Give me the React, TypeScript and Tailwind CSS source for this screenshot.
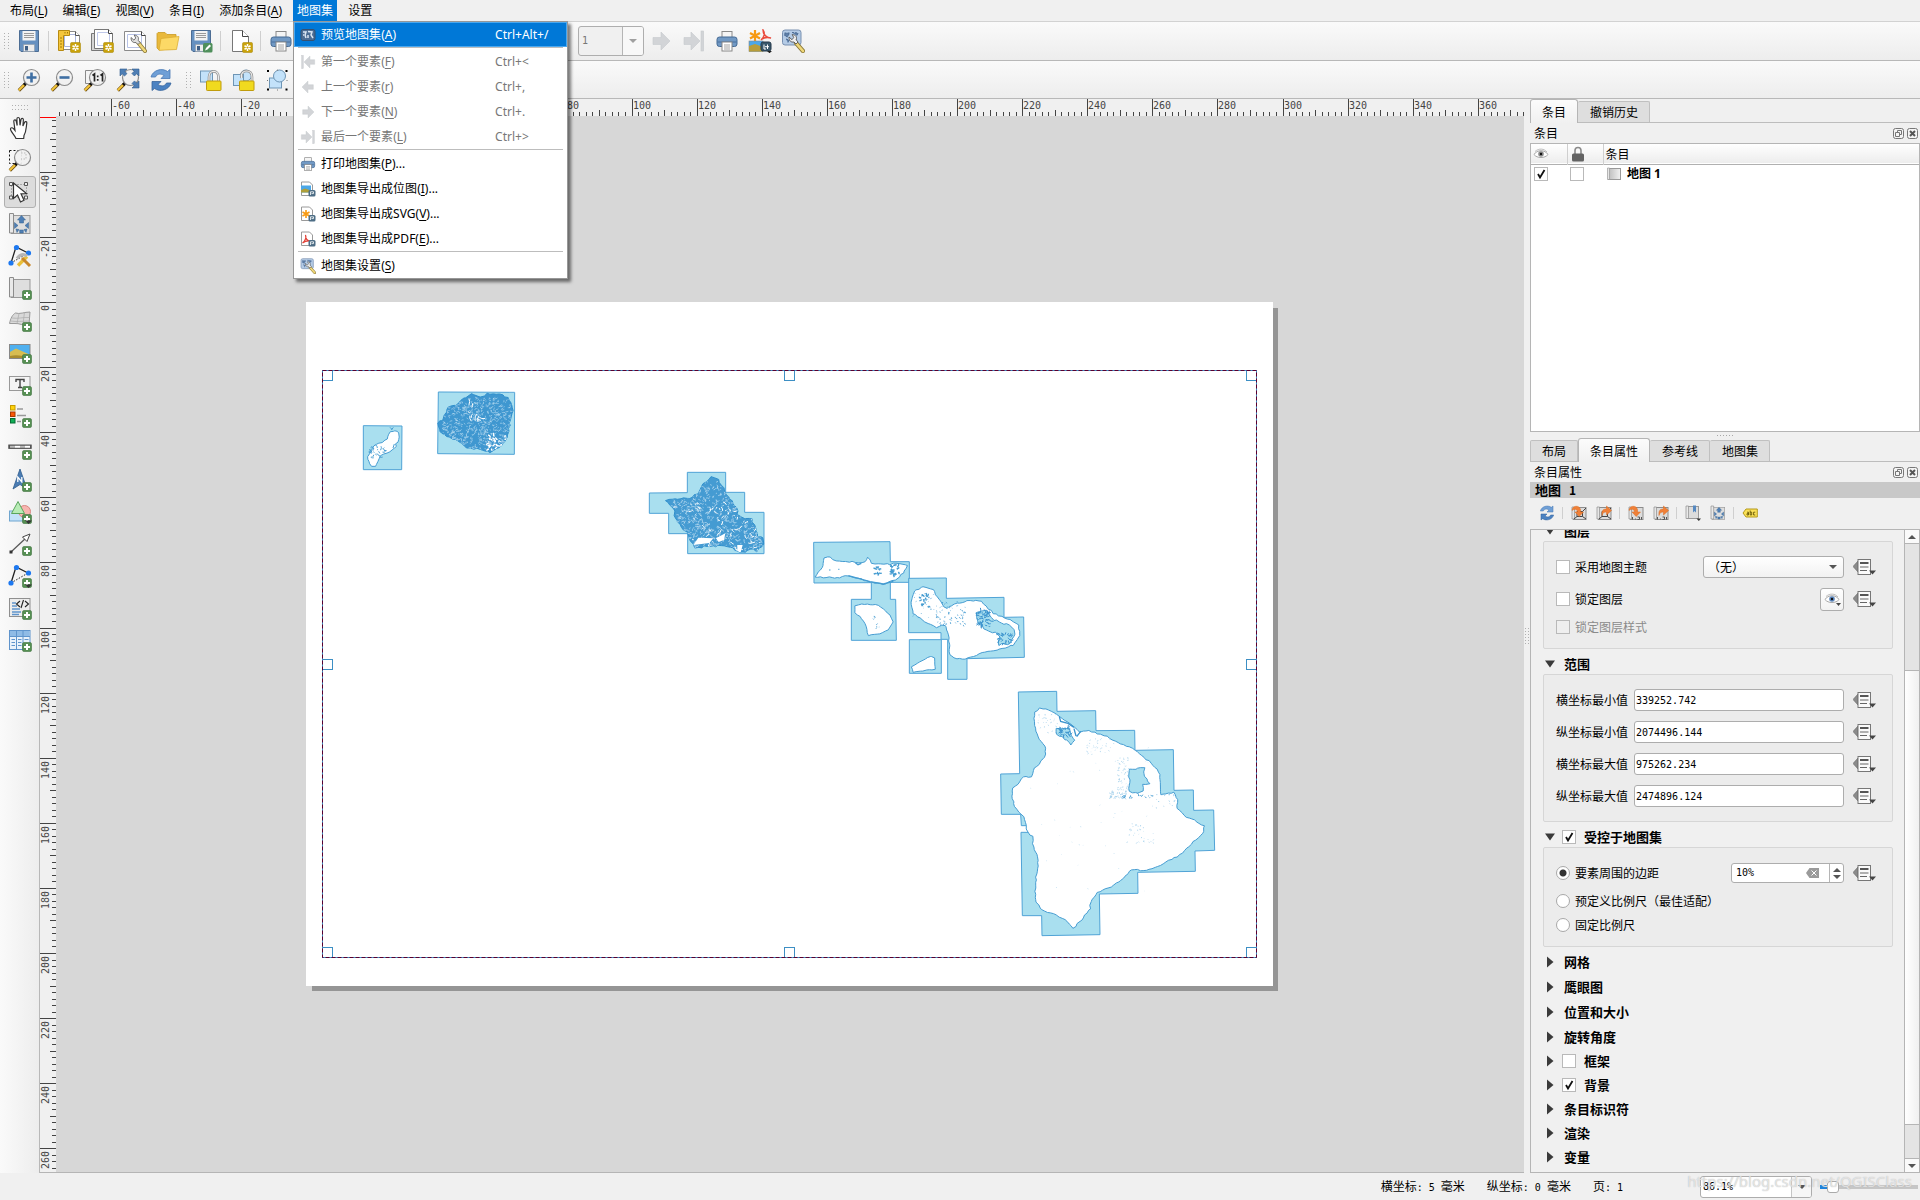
import React from "react";

/* ------------------------------------------------------------------ */
/* Shared bits                                                         */
/* ------------------------------------------------------------------ */

type IconProps = { size?: string; children: React.ReactNode; box?: string };

function Svg({ size = "size-6", box = "0 0 24 24", children }: IconProps) {
  return (
    <svg viewBox={box} className={`${size} shrink-0`} aria-hidden="true">
      {children}
    </svg>
  );
}

const PlusBadge = () => (
  <g>
    <rect x="14.5" y="14.5" width="9" height="9" rx="1.5" fill="#568f53" stroke="#3f7340" strokeWidth=".6" />
    <path d="M19 16v6M16 19h6" stroke="#fff" strokeWidth="2" />
  </g>
);

const StarBadge = () => (
  <g>
    <rect x="13.5" y="13.5" width="10" height="10" rx="1.2" fill="#c9a20a" stroke="#a58300" strokeWidth=".5" />
    <path d="M18.500 15v7M15.500 16.750l6 3.500M15.500 20.250l6-3.500" stroke="#fff" strokeWidth="1.500" />
    <circle cx="18.500" cy="18.500" r="1" fill="#c9a20a" />
  </g>
);

const DropMark = () => <path d="M17 20.500h7l-3.500 3.500z" fill="#333" />;

/* ------------------------------------------------------------------ */
/* Toolbar icons                                                       */
/* ------------------------------------------------------------------ */

const DiskShape = () => (
  <g>
    <path d="M2.500 1.500h19v21h-17.500l-1.500-1.500z" fill="#6590c0" stroke="#4c6d94" />
    <rect x="5.500" y="2" width="13" height="9.500" fill="#f3f3f3" />
    <path d="M7 4.500h10M7 6.500h10M7 8.500h10" stroke="#9a9a9a" />
    <rect x="6.500" y="15.500" width="11" height="7" fill="#ececec" stroke="#8d99a8" strokeWidth=".6" />
    <rect x="8" y="17" width="3" height="4.500" fill="#3f5f86" />
  </g>
);

const IconSave = () => (
  <Svg>
    <DiskShape />
  </Svg>
);
const IconSaveAs = () => (
  <Svg>
    <DiskShape />
    <rect x="14" y="14" width="9.500" height="9.500" rx="1.500" fill="#4f8f5b" />
    <path d="M16 21.500l1-2.500 3.500-3.500 1.500 1.500-3.500 3.500z" fill="#fff" />
  </Svg>
);
const IconNewLayout = () => (
  <Svg>
    <path d="M4.500 2.500h14l4 4v14h-18z" fill="#fff" stroke="#8a8a8a" />
    <path d="M7.500 5.500h11v12h-11z" fill="none" stroke="#aab6dd" />
    <path d="M18.500 2.500v4h4" fill="#fff" stroke="#555" />
    <path d="M1.500 1.500h11v5h-6v15h-5z" fill="#f5c63b" stroke="#b78b12" />
    <path d="M3 9h2M3 12h2M3 15h2M3 18h2M8 3v1.500M10.500 3v1.500" stroke="#8c6900" strokeWidth=".8" />
    <StarBadge />
  </Svg>
);
const IconDuplicate = () => (
  <Svg>
    <path d="M1.500 4.500h16v17h-16z" fill="#d5d5d5" stroke="#777" />
    <path d="M4.500 .5h14l4 4v15h-18z" fill="#fff" stroke="#777" />
    <path d="M7.500 3.500h12v13h-12z" fill="none" stroke="#c0c9ea" />
    <path d="M18.500 .5v4h4" fill="#fff" stroke="#444" />
    <StarBadge />
  </Svg>
);
const IconManager = () => (
  <Svg>
    <path d="M1.500 2.500h17l4 4v15h-21z" fill="#fff" stroke="#8a8a8a" />
    <path d="M4.500 5.500h14v13h-14z" fill="none" stroke="#b7c2e6" />
    <path d="M18.500 2.500v4h4" fill="#fff" stroke="#444" />
    <path d="M15.500 14l6.500 8" stroke="#8c7a3b" strokeWidth="4" strokeLinecap="round" />
    <path d="M15.500 14l6.500 8" stroke="#f0d879" strokeWidth="2.400" strokeLinecap="round" />
    <path d="M8 8.500c0 4 2 5.500 5 5l2 2 2-2-1.800-2.200c1-3-.5-4.800-4-5.300l1.500 3-1.700 2.200z" fill="#e2e2e2" stroke="#555" strokeWidth=".8" />
  </Svg>
);
const IconFolder = () => (
  <Svg>
    <path d="M1 4.500l1-1h7l2 2h9v14l-17 1.500-2-2z" fill="#e9b93c" stroke="#c99a23" strokeWidth=".8" />
    <path d="M5 9.500l18-2-2.500 13-17.500.800z" fill="#fcd966" stroke="#dcae35" strokeWidth=".8" />
  </Svg>
);
const IconNewPage = () => (
  <Svg>
    <path d="M3.500 1.500h10l6 6v15h-16z" fill="#fff" stroke="#777" />
    <path d="M13.500 1.500v6h6" fill="#fff" stroke="#444" />
    <StarBadge />
  </Svg>
);
function IconPrinter({ size }: { size?: string }) {
  return (
    <Svg size={size}>
      <rect x="7" y="2.500" width="10" height="7" fill="#f5f5f5" stroke="#8a8a8a" />
      <rect x="2" y="8" width="20" height="9.500" rx="2.500" fill="#7199c4" stroke="#456a94" />
      <path d="M2.500 13h19" stroke="#4a6f9c" />
      <rect x="7" y="13" width="10" height="9" fill="#fff" stroke="#888" />
      <path d="M9 16h6M9 18h6M9 20h6" stroke="#999" strokeWidth=".9" />
    </Svg>
  );
}

function ArrowIcon({ flip, bar, size }: { flip?: boolean; bar?: boolean; size?: string }) {
  return (
    <Svg size={size}>
      <g transform={flip ? "translate(24 0) scale(-1 1)" : undefined} fill="#d2d4d7" stroke="#c6c9cc" strokeWidth=".6">
        <path d={bar ? "M2 8.500h7v-5.500l9 9-9 9v-5.500h-7z" : "M4 8.500h8v-5.500l9 9-9 9v-5.500h-8z"} />
        {bar && <rect x="19" y="2" width="2.600" height="20" />}
      </g>
    </Svg>
  );
}

const IconExportAtlas = () => (
  <Svg>
    <path d="M7 1v11M2 4l10 5.500M2 9.500l10-5.500" stroke="#f79a12" strokeWidth="2.200" />
    <path d="M13 11c3-3 4-7 2-10 0 5 4 8 8 8-4-1-8 0-10 2z" fill="none" stroke="#ea4a3c" strokeWidth="1.400" />
    <rect x="1" y="12" width="14" height="10.500" fill="#4ba7e8" stroke="#888" strokeWidth=".6" />
    <path d="M1 17l6-2 8 3v4.500h-14z" fill="#b79d3a" />
    <rect x="13" y="13" width="10" height="9" rx="2" fill="#39586b" stroke="#24394a" />
    <path d="M16 15.500v4.500h2M17 17.700h4M19.500 15.500v4.500" fill="none" stroke="#fff" />
    <path d="M19 22h5l-2.500 2.200z" fill="#222" />
  </Svg>
);
function IconAtlasSettings({ size }: { size?: string }) {
  return (
    <Svg size={size}>
      <rect x="1.500" y="1" width="18.500" height="15" rx="2.500" fill="#b4cbe6" stroke="#7890b0" />
      <path d="M3.500 4h5l-2 4-2.500-1zM11 3.500l6 .5-1 3M5 10l3 1-1 3M12 10l4 1" fill="#5e7fa8" stroke="#4b6a92" strokeDasharray="2 1" />
      <path d="M15 14l7 8" stroke="#8c7a3b" strokeWidth="4.200" strokeLinecap="round" />
      <path d="M15 14l7 8" stroke="#f0d879" strokeWidth="2.600" strokeLinecap="round" />
      <path d="M8 8c0 4 2 5.500 5 5l2 2 2-2-1.800-2.200c1-3-.5-4.800-4-5.300l1.500 3-1.700 2.200z" fill="#f0f0f0" stroke="#555" strokeWidth=".9" />
    </Svg>
  );
}

function Lens({ children, back }: { children?: React.ReactNode; back?: React.ReactNode }) {
  return (
    <Svg>
      {back}
      <path d="M1.800 22.500l6.500-6.500" stroke="#6a4a10" strokeWidth="3.200" />
      <path d="M1.800 22.200l5.500-5.500" stroke="#f4c63a" strokeWidth="2" />
      <path d="M7 17l2-2" stroke="#111" strokeWidth="3" />
      <circle cx="14.500" cy="9.500" r="8" fill="#f1f1f1" fillOpacity=".92" stroke="#8b8b8b" strokeWidth="1.200" />
      {children}
    </Svg>
  );
}
const IconZoomIn = () => (
  <Lens>
    <path d="M14.500 4.500v10M9.500 9.500h10" stroke="#3f6fa3" strokeWidth="2.600" />
  </Lens>
);
const IconZoomOut = () => (
  <Lens>
    <path d="M9.500 9.500h10" stroke="#3f6fa3" strokeWidth="2.600" />
  </Lens>
);
const IconZoomActual = () => (
  <Lens back={<path d="M2.500 2.500h14v13h-14z" fill="#f4f4f4" stroke="#8a8a8a" />}>
    <path d="M9.500 7.500l2-1.500v7.500M17.500 7.500l2-1.500v7.500" fill="none" stroke="#222" strokeWidth="1.700" />
    <path d="M14.700 7.500v1.700M14.700 11v1.700" stroke="#222" strokeWidth="1.700" />
  </Lens>
);
const IconZoomFull = () => (
  <Lens>
    <g fill="#4f7fb5" stroke="#2f5c8d" strokeWidth=".6">
      <path d="M4 1h7l-2.300 2.300 2.300 2.300-2.500 2.500-2.300-2.300-2.200 2.200z" />
      <path d="M23 1v7l-2.300-2.300-2.300 2.300-2.500-2.500 2.300-2.300-2.200-2.200z" />
      <path d="M23 20h-7l2.300-2.300-2.300-2.300 2.500-2.500 2.300 2.300 2.200-2.200z" />
    </g>
  </Lens>
);
function IconRefresh({ size }: { size?: string }) {
  return (
    <Svg size={size}>
      <path d="M2 9c2-7 11-9.500 16.500-5.500l2.500-2v9h-9l3-3c-4-2.500-7-1.500-8.500 1.500z" fill="#6f9fd6" stroke="#4a7ab5" strokeWidth=".8" />
      <path d="M22 15c-2 7-11 9.500-16.500 5.500l-2.500 2v-9h9l-3 3c4 2.500 7 1.500 8.500-1.500z" fill="#4b82c2" stroke="#37659c" strokeWidth=".8" />
    </Svg>
  );
}
const PadLock = ({ open }: { open?: boolean }) => {
  const shackle = open ? "M9.500 10c-1-5 2-7 5-7s5.500 2 5.500 6v4" : "M10 13v-4c0-7.500 9.500-7.500 9.500 0v4";
  return (
    <g>
      <path d={shackle} fill="none" stroke="#8f8f8f" strokeWidth="2.600" />
      <path d={shackle} fill="none" stroke="#ececec" strokeWidth="1.200" />
      <rect x="7.500" y="13" width="14.500" height="9.500" rx=".8" fill="#f0da1f" stroke="#c09c0c" />
    </g>
  );
};
const IconLock = () => (
  <Svg>
    <rect x="1.500" y="3" width="12" height="11" fill="#c3e2fa" stroke="#6e95b5" />
    <PadLock />
  </Svg>
);
const IconUnlock = () => (
  <Svg>
    <circle cx="14" cy="7.500" r="5.500" fill="#c3e2fa" stroke="#6e95b5" />
    <rect x="1.500" y="6.500" width="10" height="11" fill="#c3e2fa" stroke="#6e95b5" />
    <PadLock open />
  </Svg>
);
const IconGroup = () => (
  <Svg>
    <rect x="4.500" y="10" width="12" height="10" fill="#c3e2fa" stroke="#6e95b5" />
    <circle cx="14.500" cy="8" r="6" fill="#c3e2fa" stroke="#6e95b5" />
    <path d="M2 2h2v2h-2zM20.500 2h2v2h-2zM2 20.500h2v2h-2zM20.500 20.500h2v2h-2z" fill="#000" />
    <path d="M12 2.200h1M12 22h1M2.500 12v1M22 12v1" stroke="#777" />
  </Svg>
);

/* ------------------------------------------------------------------ */
/* Toolbox icons                                                       */
/* ------------------------------------------------------------------ */

const IconHand = () => (
  <Svg>
    <path
      d="M8 22.500c-1-3-5.500-7-5.500-9.500 0-1.800 2-1.500 3-.3l1.500 1.800-1.200-9c-.2-2 2-2.300 2.400-.5l1 4.500-.3-6.500c0-2 2.500-2 2.700 0l.4 6.300 1-5.800c.3-1.800 2.500-1.500 2.400.3l-.5 6.200 1.600-3.500c.8-1.600 2.600-.9 2.300.8-.8 4-.3 8-2.800 12.200l-.3 3z"
      fill="#fff"
      stroke="#333"
      strokeWidth="1.200"
    />
  </Svg>
);
const IconZoomTool = () => (
  <Lens back={<path d="M1.500 2.500h12v13h-12z" fill="none" stroke="#111" strokeDasharray="2 2" />}>
    <path d="M13 5h5v6h-5" fill="none" stroke="#bbb" strokeDasharray="1.500 1.500" />
  </Lens>
);
const IconSelect = () => (
  <Svg>
    <path d="M3.500 4.500h15v13h-15z" fill="none" stroke="#777" strokeDasharray="1 2" />
    <path d="M1.500 2.500h3v3h-3zM16.500 2.500h3v3h-3zM1.500 16h3v3h-3zM16.500 16h3v3h-3z" fill="#eee" stroke="#555" />
    <path d="M5.500 3v15.500l4-3.500 3 7 3.500-1.700-3-6.500 5.500-.3z" fill="#fff" stroke="#333" strokeWidth="1.200" />
  </Svg>
);
const Scroll = () => (
  <g>
    <rect x="3.500" y="3.500" width="18.500" height="18" fill="#dedede" stroke="#999" />
    <path d="M1.500 1.500h4v19.500h-4z" fill="#e9e9e9" stroke="#8c8c8c" />
  </g>
);
function IconMoveContent({ size }: { size?: string }) {
  return (
    <Svg size={size}>
      <Scroll />
      <g fill="#4f7fb5" stroke="#33608f" strokeWidth=".5">
        <path d="M13.500 3.500l4 4.500h-2v3h-4v-3h-2z" />
        <path d="M11.700 21v-3h3.600v3zM6.500 16.500v-6l3.500 3zM20.500 16.500v-6l-3.500 3z" />
        <path d="M8 17l3 .5-2 3zM19 17l-3 .5 2 3z" />
      </g>
    </Svg>
  );
}
const IconEditNodes = () => (
  <Svg>
    <path d="M3 19l5-16 12 6" fill="none" stroke="#222" strokeWidth="1.300" />
    <path d="M3 19l17-10" stroke="#222" strokeDasharray="1.500 1.500" />
    <circle cx="3" cy="19" r="2.600" fill="#1d78f0" />
    <circle cx="8.500" cy="3.500" r="2.600" fill="#1d78f0" />
    <circle cx="20.500" cy="9" r="2.600" fill="#1d78f0" />
    <path d="M10 21.500l9-9" stroke="#e9bf3a" strokeWidth="3.400" />
    <path d="M14 14l8 8" stroke="#c8862a" strokeWidth="3" />
    <path d="M9 14.500c2.500-4 6.500-5 10-2.500" fill="none" stroke="#b5b5b5" strokeWidth="3" />
  </Svg>
);
const IconAddMap = () => (
  <Svg>
    <Scroll />
    <PlusBadge />
  </Svg>
);
const IconAdd3d = () => (
  <Svg>
    <path d="M1.500 15.500c1-5 3-9 6-10.500 4 1.500 9-1 14.500-1l-1 13c-6 1-10-2-14-1.500z" fill="#d9d9d9" stroke="#9a9a9a" />
    <path d="M4 10c6 1 11-1 17.500-.5M2.500 13c6 1 12 0 18.500 0M11 5.500l-2 10M16.500 4l-1.500 12.500" fill="none" stroke="#aaa" strokeWidth=".7" />
    <PlusBadge />
  </Svg>
);
const IconPicture = () => (
  <Svg>
    <rect x="1.500" y="4.500" width="20.500" height="14" fill="#4fb0ef" stroke="#888" />
    <path d="M2 12l6-3.500 13.500 6v3.500h-19.500z" fill="#d7bd52" />
    <path d="M2 16c7-2 12 0 19.500 1v1h-19.500z" fill="#a98d2f" />
    <PlusBadge />
  </Svg>
);
const IconLabel = () => (
  <Svg>
    <rect x="1.500" y="4.500" width="20.500" height="14" fill="#f4f4f4" stroke="#999" />
    <path d="M8 10v-2.500h8v2.500M12 7.500v8M10 15.500h4" fill="none" stroke="#444" strokeWidth="1.400" />
    <PlusBadge />
  </Svg>
);
const IconLegend = () => (
  <Svg>
    <rect x="2.500" y="1.500" width="4.500" height="4.500" fill="#fdd20c" stroke="#c79b00" />
    <rect x="2.500" y="8" width="4.500" height="4.500" fill="#fb5607" stroke="#a83a00" />
    <rect x="2.500" y="14.500" width="4.500" height="4.500" fill="#0fae55" stroke="#056b32" />
    <path d="M9 5h6M9 11.500h9M9 17.500h4" stroke="#999" strokeWidth="1.500" />
    <PlusBadge />
  </Svg>
);
const IconScaleBar = () => (
  <Svg>
    <rect x=".8" y="9" width="22.400" height="3.400" fill="#555" stroke="#555" />
    <path d="M2 10.700h5M12 10.700h5" stroke="#bbb" strokeWidth="2" />
    <path d="M7 10.700h5M17 10.700h5" stroke="#fff" strokeWidth="2" />
    <PlusBadge />
  </Svg>
);
const IconNorth = () => (
  <Svg>
    <path d="M12 1l7 20-7-4.500-7 4.500z" fill="#4a7cb3" stroke="#2f5c8d" strokeWidth=".8" />
    <path d="M9.800 14v-5l4 5v-5" fill="none" stroke="#fff" strokeWidth="1.300" />
    <PlusBadge />
  </Svg>
);
const IconShape = () => (
  <Svg>
    <rect x="1.500" y="11" width="14" height="10" fill="#c3e2fa" stroke="#6fa5cf" />
    <circle cx="16.500" cy="11.500" r="6" fill="#f7b5b0" stroke="#d98680" />
    <path d="M10 1.500l6.500 12h-13z" fill="#b8ecb6" stroke="#5aa55c" />
    <PlusBadge />
    <DropMark />
  </Svg>
);
const IconArrow = () => (
  <Svg>
    <path d="M3 20l16-15" stroke="#555" strokeWidth="1.200" />
    <path d="M22 2l-7.500 3 4.500 4.500z" fill="#fff" stroke="#444" />
    <rect x="1.500" y="18.500" width="3" height="3" fill="#333" />
    <PlusBadge />
  </Svg>
);
const IconNodeItem = () => (
  <Svg>
    <path d="M3 19l5-16 12 6" fill="none" stroke="#222" strokeWidth="1.300" />
    <path d="M3 19l17-10" stroke="#222" strokeDasharray="1.500 1.500" />
    <circle cx="3" cy="19" r="2.600" fill="#1d78f0" />
    <circle cx="8.500" cy="3.500" r="2.600" fill="#1d78f0" />
    <circle cx="20.500" cy="9" r="2.600" fill="#1d78f0" />
    <PlusBadge />
    <DropMark />
  </Svg>
);
const IconHtml = () => (
  <Svg>
    <rect x="1.500" y="2.500" width="20.500" height="18" fill="#ececec" stroke="#8f8f8f" />
    <path d="M4 7h4M4 10h5M4 13h8M4 16h9M4 18.500h7" stroke="#5f94cc" strokeWidth="1.500" />
    <path d="M12 5l-3.500 3 3.500 3M17 5l3.500 3-3.500 3M15.500 4l-2.500 8" fill="none" stroke="#222" strokeWidth="1.100" />
    <PlusBadge />
  </Svg>
);
const IconTable = () => (
  <Svg>
    <rect x="1.500" y="2.500" width="20.500" height="19" fill="#eaf2fb" stroke="#5f94cc" />
    <path d="M2 3h19.500v5h-19.500z" fill="#8fbbe6" />
    <path d="M2 8.500h20M8.500 3v18M15 3v18" stroke="#5f94cc" />
    <path d="M3.500 11.500h3.500M3.500 14.500h3.500M3.500 17.500h3.500M10 11.500h3.500M10 14.500h3.500M10 17.500h3.500M16.500 11.500h4" stroke="#5f94cc" />
    <PlusBadge />
  </Svg>
);

/* ------------------------------------------------------------------ */
/* Menu icons                                                          */
/* ------------------------------------------------------------------ */

const IconPreview = () => (
  <Svg size="size-4" box="0 0 16 16">
    <rect x="1" y="2.500" width="14" height="11" rx="2" fill="#4d6d94" stroke="#37506f" />
    <path d="M3 5h3l-1 3 1 3M8 4.500l4 .5-1 3 2 3M8 8v3M3 8h1" fill="none" stroke="#dbe6f3" strokeWidth="1.500" />
  </Svg>
);
function ExportIcon({ children }: { children: React.ReactNode }) {
  return (
    <Svg size="size-4" box="0 0 16 16">
      <path d="M1.500 1h8l3 3v10.500h-11z" fill="#fff" stroke="#9a9a9a" />
      {children}
      <rect x="8.500" y="9" width="7" height="6.500" rx="1.500" fill="#4d6d85" />
      <path d="M10.500 14v-3.200h3v1.800h-2" fill="none" stroke="#fff" strokeWidth=".8" />
    </Svg>
  );
}
const IconExportImage = () => (
  <ExportIcon>
    <rect x="1" y="4.500" width="10" height="7" fill="#4ba7e8" />
    <path d="M1 9l4-1.500 6 2v2h-10z" fill="#b0a03a" />
  </ExportIcon>
);
const IconExportSvg = () => (
  <ExportIcon>
    <path d="M6 4v8M2.500 6l7 4M2.500 10l7-4" stroke="#f79a12" strokeWidth="1.600" />
  </ExportIcon>
);
const IconExportPdf = () => (
  <ExportIcon>
    <path d="M2.500 12c3-2 4-6 3-8 0 4 2 6 5 6-3-.5-6 .5-8 2z" fill="none" stroke="#e2443a" strokeWidth="1.200" />
  </ExportIcon>
);

/* ------------------------------------------------------------------ */
/* Panel icons                                                         */
/* ------------------------------------------------------------------ */

function PanelMapIcon({ kind, back }: { kind: "extent" | "scale"; back?: boolean }) {
  return (
    <Svg size="size-4" box="0 0 16 16">
      <rect x="2.500" y="2.500" width="12.500" height="12" fill="#dcdcdc" stroke="#8c8c8c" />
      <path d="M1 2h2.500v12h-2.500z" fill="#e6e6e6" stroke="#8c8c8c" strokeWidth=".7" />
      {kind === "extent" ? (
        <path d="M6 6.500h5.500v5h-5.500zM3 14l3-2.500M15 14l-3.500-2.500M15 3l-3.500 3.500" fill="none" stroke="#444" />
      ) : (
        <path d="M4.500 12v2.500M7 14h.8M9.500 12h2v2.500h-2M13.500 12v2.500" fill="none" stroke="#555" />
      )}
      {back ? (
        <path d="M6 10.500c-.5-5 1-6.500 4.500-6.500v-3l5 4.500-5 4.500v-3c-2.500 0-3.500.5-4.500 3.500z" fill="#f08038" stroke="#d96a20" strokeWidth=".5" />
      ) : (
        <path d="M1 5.500c0-5 7.500-6 8.500-.8v2.300h3l-4.300 4.500-4.200-4.500h2.500c0-3-3-3.500-5.500-1.500z" fill="#f08038" stroke="#d96a20" strokeWidth=".5" />
      )}
    </Svg>
  );
}
const IconBookmark = () => (
  <Svg size="size-4" box="0 0 16 16">
    <rect x="2.500" y="1.500" width="11" height="12" fill="#dcdcdc" stroke="#999" />
    <path d="M1 1h2.500v12.500h-2.500z" fill="#e9e9e9" stroke="#8c8c8c" strokeWidth=".7" />
    <path d="M8 .5h3v7l-1.500-1.500-1.500 1.500z" fill="#5588c0" />
    <path d="M11.500 13.500h4.500l-2.200 2.500z" fill="#333" />
  </Svg>
);
const IconAbc = () => (
  <Svg size="size-4" box="0 0 16 16">
    <path d="M1 8l3-4h11.300v8h-11.300z" fill="#fbe157" stroke="#b59a1c" />
    <path d="M5 7.200h1.500v2.800h-1.500v-1.400h1.500M8.200 5.500v4.500h1.500v-2.800h-1.500M13.300 7.200h-1.700v2.800h1.700" fill="none" stroke="#5c4d00" strokeWidth=".8" />
  </Svg>
);
function IconEye({ iris = "#5c86bd" }: { iris?: string }) {
  return (
    <Svg size="size-4" box="0 0 16 16">
      <path d="M1 8.500c3-5 11-5 14 0-3 4-11 4-14 0z" fill="#fff" stroke="#a8a8a8" />
      <path d="M2 5.500c4-3.500 9-3 12 .5" fill="none" stroke="#bdbdbd" />
      <circle cx="8" cy="8" r="2.800" fill={iris} />
      <circle cx="8" cy="8" r="1.200" fill="#111" />
    </Svg>
  );
}
const IconHeaderLock = () => (
  <Svg size="size-4" box="0 0 16 16">
    <path d="M4 8v-3.500c0-4 6-4 6 0v3.500" fill="none" stroke="#8a8a8a" strokeWidth="1.600" />
    <rect x="1" y="7.500" width="12" height="8" rx="1.500" fill="#636363" />
  </Svg>
);
const IconMapItem = () => (
  <Svg size="size-4" box="0 0 16 16">
    <defs>
      <linearGradient id="mapItemFill">
        <stop offset="0" stopColor="#bdbdbd" />
        <stop offset="1" stopColor="#f2f2f2" />
      </linearGradient>
    </defs>
    <rect x="2.500" y="2.500" width="12" height="11" fill="url(#mapItemFill)" stroke="#9a9a9a" />
    <path d="M1.500 2v11.500h2v-11.500z" fill="#e6e6e6" stroke="#999" strokeWidth=".7" />
  </Svg>
);

function OverrideButton({ label }: { label: string }) {
  return (
    <button type="button" aria-label={label} className="shrink-0">
      <svg viewBox="0 0 23 18" className="h-[18px] w-[23px]" aria-hidden="true">
        <path d="M0 8.500l5-5.500v11z" fill="#8b8b8b" stroke="#666" strokeWidth=".6" />
        <rect x="5" y="1.500" width="12.500" height="15" fill="#fafafa" stroke="#777" />
        <path d="M7 5h8.500" stroke="#555" strokeWidth="2" />
        <path d="M7 9h8.500M7 12.500h7" stroke="#666" />
        <path d="M16 12.500h7l-3.500 4z" fill="#444" />
      </svg>
    </button>
  );
}

/* ------------------------------------------------------------------ */
/* Map drawing                                                         */
/* ------------------------------------------------------------------ */

function makeRandom(seed: number) {
  let s = seed;
  return () => {
    s = (s * 1664525 + 1013904223) % 4294967296;
    return s / 4294967296;
  };
}

/** Turns "x,y x,y ..." into a closed path whose edges wander like a coast line. */
function coast(points: string, seed: number, jitter = 2) {
  const rnd = makeRandom(seed);
  const pts = points.split(" ").map((p) => p.split(",").map(Number));
  let d = "";
  pts.forEach(([x, y], i) => {
    const [nx, ny] = pts[(i + 1) % pts.length];
    const steps = Math.max(1, Math.round(Math.hypot(nx - x, ny - y) / 9));
    for (let k = 0; k < steps; k++) {
      const t = k / steps;
      const px = x + (nx - x) * t + (rnd() - 0.5) * jitter * 2;
      const py = y + (ny - y) * t + (rnd() - 0.5) * jitter * 2;
      d += `${d ? "L" : "M"}${px.toFixed(1)} ${py.toFixed(1)}`;
    }
  });
  return d + "Z";
}

/** Short wavy strokes scattered over a rectangle, fanning out from its centre. */
function strokes(x: number, y: number, w: number, h: number, count: number, len: number, seed: number) {
  const rnd = makeRandom(seed);
  const cx = x + w / 2;
  const cy = y + h / 2;
  let d = "";
  for (let i = 0; i < count; i++) {
    const px = x + rnd() * w;
    const py = y + rnd() * h;
    const a = Math.atan2(py - cy, px - cx) + (rnd() - 0.5) * 2.4;
    const l = len * (0.3 + rnd());
    d += `M${px.toFixed(1)} ${py.toFixed(1)}q${(Math.cos(a + 0.5) * l * 0.5).toFixed(1)} ${(Math.sin(a + 0.5) * l * 0.5).toFixed(1)} ${(Math.cos(a) * l).toFixed(1)} ${(Math.sin(a) * l).toFixed(1)}`;
  }
  return d;
}

const KAUAI =
  "415,400 432,385 445,350 470,345 505,315 520,312 535,322 560,312 590,312 625,322 638,345 638,370 630,400 622,440 610,462 572,487 540,478 500,475 480,455 440,440 420,425";
const OAHU =
  "1098,630 1170,625 1198,608 1210,580 1235,562 1255,570 1275,605 1295,635 1312,655 1310,672 1335,685 1355,685 1365,710 1375,740 1390,745 1388,765 1370,783 1350,775 1330,788 1310,785 1290,770 1240,768 1185,773 1175,755 1160,725 1140,705 1125,685 1122,655";
const NIIHAU =
  "272,425 285,421 298,428 299,440 293,455 288,462 290,470 270,485 250,490 243,497 235,515 226,531 215,528 205,515 204,500 212,480 228,463 248,456 262,447 265,433";
const MOLOKAI =
  "133,112 150,112 160,120 225,127 235,130 255,127 263,112 275,130 330,133 350,130 382,135 370,160 345,180 310,193 270,186 235,175 205,167 180,173 130,172 107,172 115,155 130,138";
const LANAI = "225,258 245,252 295,255 330,285 340,305 325,330 300,342 265,346 255,310 240,290 225,278";
const MAUI =
  "430,200 460,208 480,245 500,265 530,250 570,240 605,245 640,280 690,300 715,315 720,345 700,375 650,392 615,395 565,415 530,418 510,405 505,345 495,315 470,322 435,305 400,280 392,245 402,215";
const KAHOOLAWE = "395,440 430,420 450,408 463,415 465,448 440,450 400,456";
const HAWAII =
  "165,125 180,115 215,122 240,140 285,172 300,185 325,182 380,200 465,240 520,285 540,312 541,373 582,367 592,390 592,415 620,440 672,467 668,490 600,555 540,585 500,602 455,598 430,625 385,655 352,668 332,695 330,715 305,750 280,775 262,755 220,732 185,720 165,690 168,620 175,570 160,530 157,500 143,488 138,467 130,440 105,410 95,380 100,355 130,322 153,320 165,295 195,260 198,235 175,200 162,165";

function Handles() {
  const xs = [322.5, 784.5, 1246.5];
  const ys = [370.5, 659.5, 947.5];
  return (
    <g fill="#fff" stroke="#3d8fc4">
      {ys.flatMap((y, r) =>
        xs.map((x, c) => (r === 1 && c === 1 ? null : <rect key={`${r}${c}`} x={x} y={y} width="10" height="10" />)),
      )}
    </g>
  );
}

function MapCanvas() {
  const cell = { fill: "#a9dfef", stroke: "#4fa3d6", strokeWidth: 3 };
  const land = { fill: "#fff", stroke: "#459cd1", strokeWidth: 3 };
  return (
    <svg className="block size-full" role="img" aria-label="地图 1">
      <g transform="translate(-56 -116)">
        <path d="M312 308h966v683h-966z" fill="#959595" />
        <path d="M306 302h967v684h-967z" fill="#fff" />

        <g transform="translate(300 290) scale(.33333)">
          <path d="M190 407L306 408 305 539 190 539Z" {...cell} />
          <path d={coast(NIIHAU, 3)} {...land} />
          <path d={strokes(212, 465, 40, 40, 22, 10, 5)} fill="none" stroke="#459cd1" strokeWidth="3" />
          <path d="M270 412l6 6M280 412l-6 8M283 462l-4 12" stroke="#459cd1" strokeWidth="3" />

          <path d="M415 306L644 307 643 493 413 491Z" {...cell} />
          <clipPath id="kauai">
            <path d={coast(KAUAI, 11, 3)} />
          </clipPath>
          <path d={coast(KAUAI, 11, 3)} fill="#3f97d0" stroke="#2f8fcc" strokeWidth="3" />
          <g clipPath="url(#kauai)" fill="none">
            <path d={strokes(430, 325, 200, 155, 620, 7, 21)} stroke="#b9dcf1" strokeWidth="2" />
            <path d={strokes(505, 340, 45, 45, 9, 16, 22)} stroke="#fff" strokeWidth="3" />
            <path d={strokes(565, 435, 50, 45, 32, 8, 23)} stroke="#fff" strokeWidth="4" />
          </g>

          <path d="M1162 547H1277V607H1334V667H1392V791H1163V731H1106V670H1048V609L1162 608Z" {...cell} />
          <clipPath id="oahu">
            <path d={coast(OAHU, 17, 3)} />
          </clipPath>
          <path d={coast(OAHU, 17, 3)} fill="#459bd2" stroke="#2f8fcc" strokeWidth="3" />
          <g clipPath="url(#oahu)" fill="none">
            <path d={strokes(1110, 575, 280, 210, 800, 8, 31)} stroke="#c6e2f4" strokeWidth="2" />
            <path d={strokes(1130, 640, 260, 140, 90, 11, 32)} stroke="#fff" strokeWidth="3" />
            <path d="M1180 765l15-22 45 2-12 14zM1248 745l28-15-4 20-16 6zM1312 765h16l-6 22h-10z" fill="#fff" />
          </g>
        </g>

        <g transform="translate(780 520) scale(.33333)">
          <path d="M101 67L330 65 331 125H388V187H331V238H347L349 361H214V238H274V188L102 189Z" {...cell} />
          <path d={coast(MOLOKAI, 41)} {...land} />
          <path d={strokes(288, 142, 10, 20, 16, 7, 42)} fill="none" stroke="#459cd1" strokeWidth="4" />
          <path d={strokes(334, 136, 22, 28, 30, 8, 43)} fill="none" stroke="#459cd1" strokeWidth="4" />
          <path d="M205 167l30 8 35 10 40 7 30-8M226 128l8 6 10-4M148 150h3M175 148h3" fill="none" stroke="#459cd1" strokeWidth="4" />
          <path d={coast(LANAI, 44, 1)} {...land} />
          <path d={strokes(274, 284, 26, 40, 9, 4, 45)} fill="none" stroke="#459cd1" strokeWidth="3" />

          <path d="M386 175L499 174V235L672 232V292L731 291 733 412 561 416V478H503V358H483V338H386Z" {...cell} />
          <path d="M388 359H484V460H388Z" {...cell} />
          <path d={coast(MAUI, 47)} {...land} />
          <path d={coast(KAHOOLAWE, 48)} {...land} />
          <path d={strokes(422, 226, 28, 36, 18, 9, 49)} fill="none" stroke="#459cd1" strokeWidth="4" />
          <path d={strokes(470, 245, 85, 70, 60, 4, 50)} fill="none" stroke="#459cd1" strokeWidth="3" />
          <path d={strokes(398, 215, 70, 85, 24, 3, 51)} fill="none" stroke="#459cd1" strokeWidth="3" />
          <path
            d={coast("590,275 618,272 640,300 690,315 705,340 690,372 655,374 660,345 620,330 595,310", 52, 3)}
            fill="#a9dfef"
            stroke="#459cd1"
            strokeWidth="3"
          />
          <path d={strokes(596, 276, 32, 44, 46, 11, 53)} fill="none" stroke="#3b93cd" strokeWidth="3" />
          <path d={strokes(656, 342, 36, 28, 34, 9, 54)} fill="none" stroke="#3b93cd" strokeWidth="3" />
        </g>

        <g transform="translate(980 670) scale(.33333)">
          <path
            d="M115 66L230 64 231 124 347 122 348 182 464 181 465 241 580 239 582 361 640 360 641 421 701 420 704 541 645 543 646 604 473 607 474 670 358 672 360 794 186 797 185 737 127 737 123 487 160 487V467H124L122 433 64 433 62 312 119 311Z"
            {...cell}
          />
          <path d={coast(HAWAII, 61)} {...land} />
          <path
            d={coast("450,295 492,295 495,320 507,340 490,345 488,362 465,370 447,365", 62, 3)}
            fill="#a9dfef"
            stroke="#459cd1"
            strokeWidth="3"
          />
          <path d={coast("230,172 268,178 285,212 275,222 232,192", 63, 3)} fill="#a9dfef" stroke="#459cd1" strokeWidth="3" />
          <path d={strokes(240, 174, 30, 22, 34, 8, 64)} fill="none" stroke="#3b93cd" strokeWidth="3" />
          <path d="M238 140l4 14 22 6 18 12M282 176l6 22M290 200l12-16" fill="none" stroke="#3b93cd" strokeWidth="4" />
          <path d={strokes(412, 262, 34, 120, 70, 3, 65)} fill="none" stroke="#8dc4e6" strokeWidth="2.500" />
          <path d={strokes(388, 364, 50, 22, 40, 4, 66)} fill="none" stroke="#8dc4e6" strokeWidth="2.500" />
          <path d={strokes(430, 376, 90, 8, 16, 8, 67)} fill="none" stroke="#459cd1" strokeWidth="3" />
          <path d={strokes(320, 205, 80, 48, 34, 3, 68)} fill="none" stroke="#a6d1ec" strokeWidth="2.500" />
          <path d={strokes(175, 120, 60, 70, 26, 3, 69)} fill="none" stroke="#8dc4e6" strokeWidth="2.500" />
          <path d={strokes(440, 460, 80, 58, 30, 3, 70)} fill="none" stroke="#8dc4e6" strokeWidth="2.500" />
          <path d={strokes(150, 230, 360, 450, 40, 2, 71)} fill="none" stroke="#a6d1ec" strokeWidth="2.500" />
          <path d={strokes(508, 372, 80, 50, 18, 4, 72)} fill="none" stroke="#8dc4e6" strokeWidth="3" />
        </g>

        <Handles />
        <path d="M322.500 370.500h934v587h-934z" fill="none" stroke="#3d8fc4" />
        <path d="M322.500 370.500h934v587h-934z" fill="none" stroke="#5a0030" strokeDasharray="4 2" />
      </g>
    </svg>
  );
}

/* ------------------------------------------------------------------ */
/* Rulers                                                              */
/* ------------------------------------------------------------------ */

const PX_PER_MM = 3.255;
const range = (from: number, to: number) => Array.from({ length: (to - from) / 2 + 1 }, (_, i) => from + i * 2);

function HorizontalRuler() {
  return (
    <svg className="block h-[17px] w-full bg-[#f0f0f0]" aria-hidden="true">
      {range(-76, 374).map((v) => {
        const x = Math.round(266 + v * PX_PER_MM);
        const top = v % 20 === 0 ? 0 : v % 10 === 0 ? 11 : 13;
        return <path key={v} d={`M${x + 0.5} ${top}V17`} stroke="#444" />;
      })}
      {range(-60, 360)
        .filter((v) => v % 20 === 0)
        .map((v) => (
          <text
            key={v}
            x={Math.round(266 + v * PX_PER_MM) + 1}
            y="10"
            fill="#444"
            className="font-['DejaVu_Sans_Mono',monospace] text-[10px]"
          >
            {v}
          </text>
        ))}
    </svg>
  );
}

function VerticalRuler() {
  return (
    <svg className="block h-full w-4 shrink-0 bg-[#f0f0f0]" aria-hidden="true">
      <path d="M0 1.500H16" stroke="#f00" />
      {range(-56, 266).map((v) => {
        const y = Math.round(186 + v * PX_PER_MM);
        const left = v % 20 === 0 ? 0 : v % 10 === 0 ? 10 : 12;
        return <path key={v} d={`M${left} ${y + 0.5}H16`} stroke="#444" />;
      })}
      {range(-40, 260)
        .filter((v) => v % 20 === 0)
        .map((v) => (
          <text
            key={v}
            transform={`translate(9 ${Math.round(186 + v * PX_PER_MM) + 3}) rotate(-90)`}
            textAnchor="end"
            fill="#444"
            className="font-['DejaVu_Sans_Mono',monospace] text-[10px]"
          >
            {v}
          </text>
        ))}
    </svg>
  );
}

/* ------------------------------------------------------------------ */
/* Top bars                                                            */
/* ------------------------------------------------------------------ */

const MENUS: [string, string?][] = [
  ["布局", "L"],
  ["编辑", "E"],
  ["视图", "V"],
  ["条目", "I"],
  ["添加条目", "A"],
  ["地图集"],
  ["设置"],
];

function Caption({ text, mnemonic, dots }: { text: string; mnemonic?: string; dots?: boolean }) {
  return (
    <>
      {text}
      {mnemonic && (
        <>
          (<u className="underline-offset-2">{mnemonic}</u>)
        </>
      )}
      {dots && "..."}
    </>
  );
}

type Entry = { text: string; key: string; icon: React.ReactNode; shortcut?: string; dots?: boolean; disabled?: boolean; active?: boolean };

const ATLAS_MENU: (Entry | null)[] = [
  { text: "预览地图集", key: "A", icon: <IconPreview />, shortcut: "Ctrl+Alt+/", active: true },
  null,
  { text: "第一个要素", key: "F", icon: <ArrowIcon size="size-4" flip bar />, shortcut: "Ctrl+<", disabled: true },
  { text: "上一个要素", key: "r", icon: <ArrowIcon size="size-4" flip />, shortcut: "Ctrl+,", disabled: true },
  { text: "下一个要素", key: "N", icon: <ArrowIcon size="size-4" />, shortcut: "Ctrl+.", disabled: true },
  { text: "最后一个要素", key: "L", icon: <ArrowIcon size="size-4" bar />, shortcut: "Ctrl+>", disabled: true },
  null,
  { text: "打印地图集", key: "P", icon: <IconPrinter size="size-4" />, dots: true },
  { text: "地图集导出成位图", key: "I", icon: <IconExportImage />, dots: true },
  { text: "地图集导出成SVG", key: "V", icon: <IconExportSvg />, dots: true },
  { text: "地图集导出成PDF", key: "E", icon: <IconExportPdf />, dots: true },
  null,
  { text: "地图集设置", key: "S", icon: <IconAtlasSettings size="size-4" /> },
];

function AtlasMenu() {
  return (
    <div
      role="menu"
      aria-label="地图集"
      className="absolute top-full left-0 z-20 w-[275px] border border-[#979797] bg-white shadow-[3px_3px_3px_rgba(0,0,0,0.5)]"
    >
      {ATLAS_MENU.map((item, i) =>
        item === null ? (
          <div key={i} role="separator" className="mx-1 h-0.5 border-t border-[#bdbdbd]" />
        ) : (
          <button
            key={i}
            type="button"
            role="menuitem"
            disabled={item.disabled}
            className={`flex h-[25px] w-full items-center border pl-[5px] text-left ${
              item.active
                ? "border-[#4aa8f0] bg-[#0078d7] text-white"
                : item.disabled
                  ? "border-transparent text-[#777]"
                  : "border-transparent text-black"
            }`}
          >
            {item.icon}
            <span className="flex-1 pl-[5px]">
              <Caption text={item.text} mnemonic={item.key} dots={item.dots} />
            </span>
            <span className="w-[71px]">{item.shortcut}</span>
          </button>
        ),
      )}
    </div>
  );
}

function MenuBar() {
  return (
    <nav className="flex h-[22px] shrink-0 gap-[7px] border-b border-[#d2d2d2] bg-[#f0f0f0] pl-[6px] font-['Noto_Sans','Noto_Sans_CJK_SC',sans-serif] text-xs leading-4">
      {MENUS.map(([text, key]) => (
        <div key={text} className="relative">
          <button type="button" className={`h-[22px] px-1 ${text === "地图集" ? "bg-[#0078d7] text-white" : ""}`}>
            <Caption text={text} mnemonic={key} />
          </button>
          {text === "地图集" && <AtlasMenu />}
        </div>
      ))}
    </nav>
  );
}

function Tool({ label, children, disabled }: { label: string; children: React.ReactNode; disabled?: boolean }) {
  return (
    <button type="button" aria-label={label} disabled={disabled} className="grid h-8 w-[33px] shrink-0 place-items-center">
      {children}
    </button>
  );
}

const ToolSep = () => <div className="mx-[3px] h-5 w-px bg-[#cfcfcf]" />;
const Grip = () => (
  <svg className="mr-[3px] ml-1 h-4 w-[5px] shrink-0" aria-hidden="true">
    {[0, 1, 2, 3, 4, 5].map((i) => (
      <path key={i} d={`M0 ${i * 3 + 0.5}h1M4 ${i * 3 + 0.5}h1`} stroke="#b0b0b0" />
    ))}
  </svg>
);

function Toolbars() {
  return (
    <div className="shrink-0">
      <div role="toolbar" className="flex h-[39px] items-center border-b border-[#b8b8b8] bg-linear-to-b from-[#fafafa] to-[#ededed]">
        <Grip />
        <Tool label="保存工程"><IconSave /></Tool>
        <ToolSep />
        <Tool label="新建布局"><IconNewLayout /></Tool>
        <Tool label="复制布局"><IconDuplicate /></Tool>
        <Tool label="布局管理器"><IconManager /></Tool>
        <Tool label="从模板添加条目"><IconFolder /></Tool>
        <Tool label="另存为模板"><IconSaveAs /></Tool>
        <ToolSep />
        <Tool label="添加页面"><IconNewPage /></Tool>
        <ToolSep />
        <Tool label="打印"><IconPrinter /></Tool>
        <div className="ml-[281px] flex h-[30px] w-[66px] overflow-hidden rounded-[3px] border border-[#aeaeae] bg-[#f0f0f0]">
          <input
            aria-label="要素"
            defaultValue="1"
            disabled
            className="min-w-0 flex-1 border-r border-[#b5b5b5] px-[3px] font-['DejaVu_Sans_Mono',monospace] text-[10px] text-[#777]"
          />
          <button type="button" aria-label="选择要素" disabled className="grid w-5 place-items-center bg-[#f8f8f8]">
            <svg className="h-1 w-2" aria-hidden="true"><path d="M0 0h8l-4 4z" fill="#a0a0a0" /></svg>
          </button>
        </div>
        <Tool label="下一个要素" disabled><ArrowIcon /></Tool>
        <Tool label="最后一个要素" disabled><ArrowIcon bar /></Tool>
        <Tool label="打印地图集"><IconPrinter /></Tool>
        <Tool label="导出地图集"><IconExportAtlas /></Tool>
        <Tool label="地图集设置"><IconAtlasSettings /></Tool>
      </div>
      <div role="toolbar" className="flex h-[38px] items-center border-b border-[#b8b8b8] bg-linear-to-b from-[#fafafa] to-[#ededed]">
        <Grip />
        <Tool label="放大"><IconZoomIn /></Tool>
        <Tool label="缩小"><IconZoomOut /></Tool>
        <Tool label="缩放至100%"><IconZoomActual /></Tool>
        <Tool label="全图缩放"><IconZoomFull /></Tool>
        <Tool label="刷新"><IconRefresh /></Tool>
        <div className="pl-[5px]"><Grip /></div>
        <Tool label="锁定选中条目"><IconLock /></Tool>
        <Tool label="全部解锁"><IconUnlock /></Tool>
        <Tool label="组合"><IconGroup /></Tool>
      </div>
    </div>
  );
}

const TOOLBOX: [string, React.ReactNode][] = [
  ["平移布局", <IconHand />],
  ["缩放", <IconZoomTool />],
  ["选择/移动条目", <IconSelect />],
  ["移动条目内容", <IconMoveContent />],
  ["编辑节点条目", <IconEditNodes />],
  ["添加地图", <IconAddMap />],
  ["添加3D地图", <IconAdd3d />],
  ["添加图片", <IconPicture />],
  ["添加标注", <IconLabel />],
  ["添加图例", <IconLegend />],
  ["添加比例尺", <IconScaleBar />],
  ["添加指北针", <IconNorth />],
  ["添加形状", <IconShape />],
  ["添加箭头", <IconArrow />],
  ["添加节点条目", <IconNodeItem />],
  ["添加HTML", <IconHtml />],
  ["添加属性表", <IconTable />],
];

function Toolbox() {
  return (
    <div role="toolbar" className="flex w-10 shrink-0 flex-col items-center border-r border-[#b8b8b8] bg-linear-to-r from-[#fafafa] to-[#ededed]">
      <svg className="mt-1.5 mb-0.5 h-[5px] w-4 shrink-0" aria-hidden="true">
        {[0, 1, 2, 3, 4, 5].map((i) => (
          <path key={i} d={`M${i * 3} .5h1M${i * 3} 4.500h1`} stroke="#b0b0b0" />
        ))}
      </svg>
      {TOOLBOX.map(([label, icon], i) => (
        <button
          key={label}
          type="button"
          aria-label={label}
          aria-pressed={i === 2}
          className={`grid size-8 shrink-0 place-items-center rounded-[3px] ${i === 2 ? "border border-[#b0b0b0] bg-[#dcdcdc]" : ""}`}
        >
          {icon}
        </button>
      ))}
    </div>
  );
}

/* ------------------------------------------------------------------ */
/* Right dock                                                          */
/* ------------------------------------------------------------------ */

function Check({ label, id, checked, disabled }: { label?: string; id?: string; checked?: boolean; disabled?: boolean }) {
  return (
    <span className="grid shrink-0">
      <input
        type="checkbox"
        id={id}
        aria-label={label}
        defaultChecked={checked}
        disabled={disabled}
        className="peer col-start-1 row-start-1 size-3.5 appearance-none border border-[#b9b9b9] bg-white disabled:bg-[#efefef]"
      />
      <svg viewBox="0 0 14 14" className="pointer-events-none invisible col-start-1 row-start-1 size-3.5 peer-checked:visible" aria-hidden="true">
        <path d="M4 7l2 3.500L10.500 3" fill="none" stroke="#111" strokeWidth="1.800" />
      </svg>
    </span>
  );
}

function Tabs({ items, active }: { items: string[]; active: number }) {
  return (
    <div role="tablist" className="flex h-6 shrink-0 items-end border-b border-[#bdbdbd]">
      {items.map((text, i) => (
        <button
          key={text}
          type="button"
          role="tab"
          aria-selected={i === active}
          className={
            i === active
              ? "-mb-px h-6 rounded-t-[3px] border border-b-0 border-[#b5b5b5] bg-linear-to-b from-[#fcfcfc] to-[#f0f0f0] px-[11px]"
              : "h-[21px] rounded-t-[2px] border-t border-r border-l border-[#c0c0c0] bg-[#dedede] px-[11px] not-first:border-l-0 not-first:pl-3"
          }
        >
          {text}
        </button>
      ))}
    </div>
  );
}

function DockTitle({ text }: { text: string }) {
  return (
    <div className="flex h-5 shrink-0 items-center pr-0.5 pl-1">
      <h2 className="flex-1">{text}</h2>
      <button type="button" aria-label="浮动" className="mr-[3px]">
        <svg className="size-[11px]" viewBox="0 0 11 11" aria-hidden="true">
          <rect x=".5" y=".5" width="10" height="10" rx="2" fill="#f4f4f4" stroke="#777" />
          <path d="M4.500 4.500v-2h4v4h-2M2.500 4.500h4v4h-4z" fill="none" stroke="#777" />
        </svg>
      </button>
      <button type="button" aria-label="关闭">
        <svg className="size-[11px]" viewBox="0 0 11 11" aria-hidden="true">
          <rect x=".5" y=".5" width="10" height="10" rx="2" fill="#f4f4f4" stroke="#777" />
          <path d="M3 3l5 5M8 3l-5 5" stroke="#555" strokeWidth="2" />
        </svg>
      </button>
    </div>
  );
}

function ItemsPanel() {
  return (
    <section className="shrink-0">
      <Tabs items={["条目", "撤销历史"]} active={0} />
      <DockTitle text="条目" />
      <div className="h-[289px] border border-[#b5b5b5] bg-white">
        <table className="w-full table-fixed border-collapse text-left">
          <thead>
            <tr className="h-5 border-b border-[#b0b0b0] bg-linear-to-b from-white to-[#ededed]">
              <th className="w-9 border-r border-[#cfcfcf] pl-0.5"><IconEye iris="#8a8a8a" /></th>
              <th className="w-9 border-r border-[#cfcfcf] pl-[3px]"><IconHeaderLock /></th>
              <th className="pl-0.5 leading-4 font-normal">条目</th>
            </tr>
          </thead>
          <tbody>
            <tr className="h-[19px]">
              <td className="pl-[3px]"><Check label="可见" checked /></td>
              <td className="pl-[3px]"><Check label="锁定" /></td>
              <td>
                <span className="flex items-center gap-[5px] pl-[3px] font-['Open_Sans','Noto_Sans_CJK_SC',sans-serif] leading-4 font-bold">
                  <IconMapItem />
                  地图 1
                </span>
              </td>
            </tr>
          </tbody>
        </table>
      </div>
    </section>
  );
}

function Chevron({ open }: { open?: boolean }) {
  return (
    <svg viewBox="0 0 12 12" className="mr-2 size-3 shrink-0" aria-hidden="true">
      <path d={open ? "M1 2.500h10l-5 7z" : "M3 .5v11l6.500-5.500z"} fill="#3a3a3a" />
    </svg>
  );
}

function GroupTitle({ text, check, first }: { text: string; check?: boolean; first?: boolean }) {
  return (
    <div className={`flex h-[25px] items-end pl-[13px] text-[13px] leading-[21px] font-bold ${first ? "-mt-[14px]" : ""}`}>
      <div className="flex items-center">
        <Chevron open />
        {check && (
          <span className="-ml-[2px] mr-2">
            <Check id="controlled" checked />
          </span>
        )}
        {check ? <label htmlFor="controlled">{text}</label> : <h3>{text}</h3>}
      </div>
    </div>
  );
}

const Group = ({ children }: { children: React.ReactNode }) => (
  <div className="mr-[11px] ml-3 rounded-[2px] border border-[#d6d6d6] bg-[#ececec] py-[9px] pr-4 pl-3">{children}</div>
);

function CoordRow({ label, value }: { label: string; value: string }) {
  return (
    <div className="flex h-8 items-center">
      <label htmlFor={label} className="w-[78px]">{label}</label>
      <input
        id={label}
        defaultValue={value}
        className="mr-[9px] h-[22px] min-w-0 flex-1 rounded-[3px] border border-[#adadad] bg-white px-px font-['DejaVu_Sans_Mono',monospace] text-[10px]"
      />
      <OverrideButton label={`${label} 数据定义覆盖`} />
    </div>
  );
}

function Radio({ label, checked }: { label: string; checked?: boolean }) {
  return (
    <label className="flex flex-1 items-center gap-[5px]">
      <input
        type="radio"
        name="scale-mode"
        defaultChecked={checked}
        className="size-3.5 appearance-none rounded-full border border-[#a8a8a8] bg-white checked:bg-[radial-gradient(circle,#333_3px,#fff_4px)]"
      />
      {label}
    </label>
  );
}

function CollapsedRow({ text, tall, check }: { text: string; tall?: boolean; check?: "on" | "off" }) {
  return (
    <div className={`flex items-center pl-[13px] text-[13px] font-bold ${tall ? "h-[25px]" : "h-6"}`}>
      <Chevron />
      {check && (
        <span className="-ml-[2px] mr-2">
          <Check id={text} checked={check === "on"} />
        </span>
      )}
      {check ? <label htmlFor={text}>{text}</label> : <h3>{text}</h3>}
    </div>
  );
}

function ScrollBar() {
  return (
    <div className="flex w-[15px] shrink-0 flex-col border-l border-[#b5b5b5] bg-[#e4e4e4]">
      <button type="button" aria-label="向上滚动" className="grid h-3.5 place-items-center border-b border-[#b5b5b5] bg-[#fafafa]">
        <svg className="h-1 w-2" aria-hidden="true"><path d="M0 4h8l-4-4z" fill="#555" /></svg>
      </button>
      <div className="flex-[126]" />
      <div className="flex-[455] border-y border-[#b5b5b5] bg-linear-to-r from-white to-[#f0f0f0]" />
      <div className="flex-[33]" />
      <button type="button" aria-label="向下滚动" className="grid h-3.5 place-items-center border-t border-[#b5b5b5] bg-[#fafafa]">
        <svg className="h-1 w-2" aria-hidden="true"><path d="M0 0h8l-4 4z" fill="#555" /></svg>
      </button>
    </div>
  );
}

const PanelSep = () => <div className="mx-[3px] h-3 w-px bg-[#cfcfcf]" />;
const PanelTool = ({ label, children }: { label: string; children: React.ReactNode }) => (
  <button type="button" aria-label={label} className="grid h-6 w-[25px] place-items-center">
    {children}
  </button>
);

function PropertiesPanel() {
  return (
    <section className="flex min-h-0 flex-1 flex-col">
      <Tabs items={["布局", "条目属性", "参考线", "地图集"]} active={1} />
      <DockTitle text="条目属性" />
      <div className="flex h-4 shrink-0 items-center bg-[#c8c8c8] pl-[5px] text-[13px] leading-4 font-bold">
        地图<span className="pl-2 text-xs">1</span>
      </div>
      <div role="toolbar" className="flex h-[31px] shrink-0 items-center pr-1 pb-0.5 pl-1">
        <PanelTool label="更新地图预览"><IconRefresh size="size-4" /></PanelTool>
        <PanelSep />
        <PanelTool label="设置地图范围"><PanelMapIcon kind="extent" /></PanelTool>
        <PanelTool label="查看当前范围"><PanelMapIcon kind="extent" back /></PanelTool>
        <PanelSep />
        <PanelTool label="设置地图比例尺"><PanelMapIcon kind="scale" /></PanelTool>
        <PanelTool label="查看当前比例尺"><PanelMapIcon kind="scale" back /></PanelTool>
        <PanelSep />
        <PanelTool label="书签"><IconBookmark /></PanelTool>
        <PanelTool label="交互编辑范围"><IconMoveContent size="size-4" /></PanelTool>
        <PanelSep />
        <PanelTool label="标注设置"><IconAbc /></PanelTool>
      </div>

      <div className="flex min-h-0 flex-1 border border-[#b5b5b5]">
        <div className="min-w-0 flex-1 overflow-hidden">
          <GroupTitle text="图层" first />
          <Group>
            <div className="flex h-8 items-center">
              <Check id="theme" />
              <label htmlFor="theme" className="flex-1 pl-[5px]">采用地图主题</label>
              <div className="mr-[9px] grid w-[141px]">
                <select
                  aria-label="地图主题"
                  className="col-start-1 row-start-1 h-[22px] appearance-none rounded-[3px] border border-[#adadad] bg-linear-to-b from-white to-[#f2f2f2] pl-1 text-xs"
                >
                  <option>（无）</option>
                </select>
                <svg className="pointer-events-none col-start-1 row-start-1 mr-[7px] h-1 w-2 self-center justify-self-end" aria-hidden="true">
                  <path d="M0 0h8l-4 4z" fill="#555" />
                </svg>
              </div>
              <OverrideButton label="地图主题 数据定义覆盖" />
            </div>
            <div className="flex h-8 items-center">
              <Check id="lock-layers" />
              <label htmlFor="lock-layers" className="flex-1 pl-[5px]">锁定图层</label>
              <button
                type="button"
                aria-label="从地图主题设置图层列表"
                className="mr-[9px] flex h-[23px] w-6 items-center justify-center rounded-[3px] border border-[#adadad] bg-linear-to-b from-white to-[#f2f2f2]"
              >
                <IconEye />
                <svg className="-ml-1 mb-1 h-[3px] w-[5px] self-end" aria-hidden="true">
                  <path d="M0 0h5l-2.500 3z" fill="#444" />
                </svg>
              </button>
              <OverrideButton label="图层 数据定义覆盖" />
            </div>
            <div className="flex h-6 items-center text-[#8a8a8a]">
              <Check id="lock-styles" disabled />
              <label htmlFor="lock-styles" className="pl-[5px]">锁定图层样式</label>
            </div>
          </Group>

          <GroupTitle text="范围" />
          <Group>
            <CoordRow label="横坐标最小值" value="339252.742" />
            <CoordRow label="纵坐标最小值" value="2074496.144" />
            <CoordRow label="横坐标最大值" value="975262.234" />
            <CoordRow label="纵坐标最大值" value="2474896.124" />
          </Group>

          <GroupTitle text="受控于地图集" check />
          <Group>
            <div className="flex h-8 items-center">
              <Radio label="要素周围的边距" checked />
              <div className="mr-[9px] flex h-5 w-[113px] items-center rounded-[3px] border border-[#adadad] bg-white">
                <input
                  aria-label="边距"
                  defaultValue="10%"
                  className="min-w-0 flex-1 pl-1 font-['DejaVu_Sans_Mono',monospace] text-[10px]"
                />
                <button type="button" aria-label="清除" className="mr-[10px]">
                  <svg viewBox="0 0 13 10" className="h-[10px] w-[13px]" aria-hidden="true">
                    <path d="M0 5l3.500-5h9.500v10h-9.500z" fill="#9a9a9a" />
                    <path d="M5.500 2.500l5 5M10.500 2.500l-5 5" stroke="#fff" />
                  </svg>
                </button>
                <div className="flex h-full w-3.5 flex-col items-center justify-center gap-[3px] border-l border-[#b5b5b5]">
                  <button type="button" aria-label="增加">
                    <svg className="h-1 w-2" aria-hidden="true"><path d="M0 4h8l-4-4z" fill="#555" /></svg>
                  </button>
                  <button type="button" aria-label="减少">
                    <svg className="h-1 w-2" aria-hidden="true"><path d="M0 0h8l-4 4z" fill="#555" /></svg>
                  </button>
                </div>
              </div>
              <OverrideButton label="边距 数据定义覆盖" />
            </div>
            <div className="flex h-6 items-center"><Radio label="预定义比例尺（最佳适配）" /></div>
            <div className="flex h-6 items-center"><Radio label="固定比例尺" /></div>
          </Group>

          <div className="pt-0.5">
            <CollapsedRow text="网格" tall />
            <CollapsedRow text="鹰眼图" tall />
            <CollapsedRow text="位置和大小" tall />
            <CollapsedRow text="旋转角度" tall />
            <CollapsedRow text="框架" check="off" />
            <CollapsedRow text="背景" check="on" />
            <CollapsedRow text="条目标识符" />
            <CollapsedRow text="渲染" />
            <CollapsedRow text="变量" />
          </div>
        </div>
        <ScrollBar />
      </div>
    </section>
  );
}

function StatusText({ name, value, unit }: { name: string; value: string; unit?: string }) {
  return (
    <span className="whitespace-pre">
      {name}
      <span className="font-['DejaVu_Sans_Mono',monospace] text-[10px]">{unit ? `: ${value} ` : `: ${value}`}</span>
      {unit}
    </span>
  );
}

function StatusBar() {
  return (
    <footer className="relative flex h-[27px] shrink-0 items-center justify-end bg-[#f0f0f0] pr-0.5">
      <div className="mr-[77px] flex gap-[22px]">
        <StatusText name="横坐标" value="5" unit="毫米" />
        <StatusText name="纵坐标" value="0" unit="毫米" />
        <StatusText name="页" value="1" />
      </div>
      <div className="mr-2 flex h-[22px] w-28 overflow-hidden rounded-[3px] border border-[#adadad] bg-white">
        <input aria-label="缩放" defaultValue="86.1%" className="min-w-0 flex-1 px-0.5 font-['DejaVu_Sans_Mono',monospace] text-[10px]" />
        <button type="button" aria-label="缩放级别" className="grid w-5 place-items-center border-l border-[#c5c5c5] bg-[#f6f6f6]">
          <svg className="h-1 w-2" aria-hidden="true"><path d="M0 0h8l-4 4z" fill="#555" /></svg>
        </button>
      </div>
      <input
        type="range"
        aria-label="缩放滑块"
        defaultValue="8"
        className="h-3 w-[98px] appearance-none bg-[linear-gradient(to_right,#1d84dd_8px,#c6c6c6_8px)] bg-size-[100%_4px] bg-center bg-no-repeat [&::-webkit-slider-thumb]:h-3 [&::-webkit-slider-thumb]:w-3 [&::-webkit-slider-thumb]:appearance-none [&::-webkit-slider-thumb]:rounded-[3px] [&::-webkit-slider-thumb]:border [&::-webkit-slider-thumb]:border-[#aaa] [&::-webkit-slider-thumb]:bg-white"
      />
      <span className="pointer-events-none absolute top-0 right-2 font-['Noto_Sans',sans-serif] text-[15px] leading-4 text-white/60 [text-shadow:0_0_1px_#aaa]">
        https://blog.csdn.net/QGISClass
      </span>
    </footer>
  );
}

export default function App() {
  return (
    <div className="flex h-screen flex-col overflow-hidden bg-[#f0f0f0] font-['Noto_Sans_CJK_SC',sans-serif] text-xs leading-4 text-black">
      <MenuBar />
      <Toolbars />
      <div className="flex min-h-0 flex-1">
        <Toolbox />
        <main className="flex min-w-0 flex-1 flex-col border-b border-[#b5b5b5]">
          <HorizontalRuler />
          <div className="flex min-h-0 flex-1">
            <VerticalRuler />
            <div className="min-w-0 flex-1 bg-[#d7d7d7]">
              <MapCanvas />
            </div>
          </div>
        </main>
        <div className="flex w-1.5 shrink-0 items-center justify-center">
          <svg className="h-4 w-1" aria-hidden="true">
            {[0, 1, 2, 3, 4, 5].map((i) => (
              <path key={i} d={`M0 ${i * 3 + 0.5}h1M3 ${i * 3 + 0.5}h1`} stroke="#b0b0b0" />
            ))}
          </svg>
        </div>
        <aside className="flex w-[390px] shrink-0 flex-col">
          <ItemsPanel />
          <div className="flex h-1.5 shrink-0 items-center justify-center">
            <svg className="h-px w-4" aria-hidden="true">
              <path d="M0 .5h16" stroke="#a8a8a8" strokeDasharray="1 2" />
            </svg>
          </div>
          <PropertiesPanel />
        </aside>
      </div>
      <StatusBar />
    </div>
  );
}
